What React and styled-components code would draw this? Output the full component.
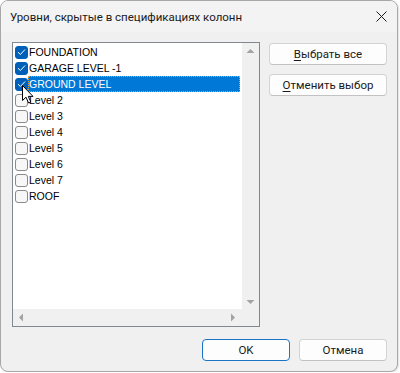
import React from "react";
import styled, { createGlobalStyle } from "styled-components";

const Global = createGlobalStyle`
  html, body {
    margin: 0;
    padding: 0;
    background: #ffffff;
  }
  body {
    font-family: Roboto, "Noto Sans", sans-serif;
  }
`;

const Window = styled.div`
  position: relative;
  width: 396px;
  height: 370px;
  border: 1px solid #a7a7a7;
  border-radius: 8px;
  background: #f0f0f0;
  overflow: hidden;
  display: flex;
  flex-direction: column;
  box-shadow: 1px 1px 2px rgba(0, 0, 0, 0.12);
`;

const TitleBar = styled.div`
  height: 31px;
  flex: none;
  display: flex;
  align-items: center;
  justify-content: space-between;
  padding: 0 10px 0 9px;
  background: #f3f3f3;
  font-size: 11.5px;
  color: #1a1a1a;
`;

const Body = styled.div`
  flex: 1;
  display: grid;
  grid-template-columns: 248px 118px;
  grid-template-rows: 1fr auto;
  column-gap: 9px;
  row-gap: 12px;
  padding: 10px 10px 12px 11px;
`;

const ListBox = styled.div`
  height: 283px;
  border: 1px solid #828790;
  background: #ffffff;
  display: grid;
  grid-template-columns: 1fr 17px;
  grid-template-rows: 1fr 17px;
`;

const Items = styled.div`
  padding: 1px 2px 0 1px;
  display: flex;
  flex-direction: column;
`;

const Row = styled.div`
  height: 16px;
  display: flex;
  align-items: center;
  font-family: "Liberation Sans", Arial, sans-serif;
  font-size: 10.5px;
  color: #000;
`;

const Box = styled.span`
  width: 11px;
  height: 11px;
  flex: none;
  margin-left: 1px;
  border-radius: 3px;
  border: 1px solid ${(p) => (p.$checked ? "#005fb8" : "#8a8a8a")};
  background: ${(p) => (p.$checked ? "#005fb8" : "#f7f7f7")};
  display: flex;
  align-items: center;
  justify-content: center;
`;

const Label = styled.span`
  flex: 1;
  height: 16px;
  line-height: 16px;
  padding-left: 1px;
  box-sizing: border-box;
  background: ${(p) => (p.$selected ? "#0078d7" : "transparent")};
  color: ${(p) => (p.$selected ? "#ffffff" : "#000000")};
  outline: ${(p) => (p.$selected ? "1px dotted #f0a030" : "none")};
  outline-offset: -1px;
`;

const VScroll = styled.div`
  background: #f0f0f0;
  display: flex;
  flex-direction: column;
  justify-content: space-between;
  align-items: center;
  padding: 5px 0 4px;
`;

const HScroll = styled.div`
  background: #f0f0f0;
  display: flex;
  justify-content: space-between;
  align-items: center;
  padding: 0 6px 0 5px;
`;

const Corner = styled.div`
  background: #f0f0f0;
`;

const Side = styled.div`
  display: flex;
  flex-direction: column;
  gap: 9px;
  padding-top: 1px;
`;

const Footer = styled.div`
  grid-column: 1 / span 2;
  display: flex;
  justify-content: flex-end;
  gap: 9px;
`;

const Button = styled.button`
  width: ${(p) => p.$w || "118px"};
  height: 22px;
  padding: 0;
  border-radius: 4px;
  border: 1px solid ${(p) => (p.$default ? "#1a73c7" : "#d3d3d3")};
  border-bottom-color: ${(p) => (p.$default ? "#1a73c7" : "#c2c2c2")};
  background: #fdfdfd;
  font-family: Roboto, "Noto Sans", sans-serif;
  font-size: 11.5px;
  color: #1a1a1a;
  u {
    text-decoration-thickness: 1px;
    text-underline-offset: 2px;
  }
`;

const Cursor = styled.svg`
  position: absolute;
  left: 21px;
  top: 84px;
`;

const Check = () => (
  <svg width="9" height="8" viewBox="0 0 9 8">
    <path d="M1 4.2 L3.4 6.5 L8 1.5" fill="none" stroke="#ffffff" strokeWidth="1" />
  </svg>
);

const Tri = ({ dir }) => {
  const pts = {
    up: "0,5 4,1 8,5",
    down: "0,1 8,1 4,5",
    left: "5,0 5,8 1,4",
    right: "1,0 1,8 5,4",
  }[dir];
  const vertical = dir === "up" || dir === "down";
  return (
    <svg width={vertical ? 9 : 6} height={vertical ? 6 : 9} viewBox={vertical ? "0 0 8 6" : "0 0 6 8"}>
      <polygon points={pts} fill="#a3a3a3" />
    </svg>
  );
};

const levels = [
  { name: "FOUNDATION", checked: true },
  { name: "GARAGE LEVEL -1", checked: true },
  { name: "GROUND LEVEL", checked: true, selected: true },
  { name: "Level 2" },
  { name: "Level 3" },
  { name: "Level 4" },
  { name: "Level 5" },
  { name: "Level 6" },
  { name: "Level 7" },
  { name: "ROOF" },
];

export default function App() {
  return (
    <>
      <Global />
      <Window>
        <TitleBar>
          <span>Уровни, скрытые в спецификациях колонн</span>
          <svg width="11" height="11" viewBox="0 0 11 11">
            <path d="M0.5 0.5 L10.5 10.5 M10.5 0.5 L0.5 10.5" stroke="#1a1a1a" strokeWidth="1" />
          </svg>
        </TitleBar>
        <Body>
          <ListBox>
            <Items>
              {levels.map((l) => (
                <Row key={l.name}>
                  <Box $checked={l.checked}>{l.checked && <Check />}</Box>
                  <Label $selected={l.selected}>{l.name}</Label>
                </Row>
              ))}
            </Items>
            <VScroll>
              <Tri dir="up" />
              <Tri dir="down" />
            </VScroll>
            <HScroll>
              <Tri dir="left" />
              <Tri dir="right" />
            </HScroll>
            <Corner />
          </ListBox>
          <Side>
            <Button>
              <u>В</u>ыбрать все
            </Button>
            <Button>
              <u>О</u>тменить выбор
            </Button>
          </Side>
          <Footer>
            <Button $w="88px" $default>
              OK
            </Button>
            <Button $w="88px">Отмена</Button>
          </Footer>
        </Body>
        <Cursor width="12" height="19" viewBox="0 0 12 19">
          <path
            d="M0.5 0.5 L0.5 15.5 L4 12.2 L6.6 18 L8.8 17 L6.3 11.4 L11 11.4 Z"
            fill="#ffffff"
            stroke="#000000"
            strokeWidth="1"
            strokeLinejoin="round"
          />
        </Cursor>
      </Window>
    </>
  );
}
